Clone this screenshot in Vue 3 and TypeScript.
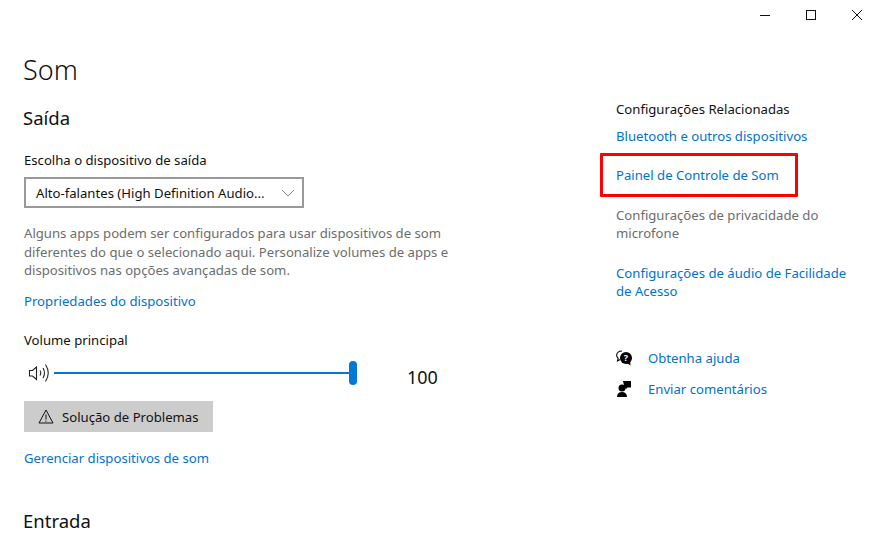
<template>
  <div class="window">
    <header class="titlebar">
      <button class="winbtn" type="button" aria-label="Minimizar">
        <svg width="10" height="10" viewBox="0 0 10 10"><path d="M0 5.500h10" stroke="#111" fill="none" /></svg>
      </button>
      <button class="winbtn" type="button" aria-label="Maximizar">
        <svg width="10" height="10" viewBox="0 0 10 10"><rect x=".5" y=".5" width="9" height="9" stroke="#111" fill="none" /></svg>
      </button>
      <button class="winbtn" type="button" aria-label="Fechar">
        <svg width="10" height="10" viewBox="0 0 10 10"><path d="M0 0l10 10M10 0L0 10" stroke="#111" fill="none" /></svg>
      </button>
    </header>

    <div class="content">
      <main class="main">
        <h1 class="title">Som</h1>
        <h2 class="section">Saída</h2>
        <div class="label">Escolha o dispositivo de saída</div>
        <div class="select">
          <span>Alto-falantes (High Definition Audio...</span>
          <svg width="14" height="8" viewBox="0 0 14 8"><path d="M1 1l6 6 6-6" stroke="#888" fill="none" /></svg>
        </div>
        <p class="hint">
          Alguns apps podem ser configurados para usar dispositivos de som<br />
          diferentes do que o selecionado aqui. Personalize volumes de apps e<br />
          dispositivos nas opções avançadas de som.
        </p>
        <a class="link props">Propriedades do dispositivo</a>
        <div class="label volume-label">Volume principal</div>
        <div class="volume">
          <svg class="speaker" width="22" height="20" viewBox="0 0 22 20">
            <path d="M1.500 7.500v5.500h3l4 3.500V4l-4 3.500z" stroke="#222" stroke-width="1.100" fill="none" />
            <path d="M12 7.500q1.500 2.500 0 5M15 5q3 5 0 10M17.500 1.500q5.500 8.500 0 17" stroke="#222" stroke-width="1.100" fill="none" />
          </svg>
          <div class="track"><span class="thumb"></span></div>
          <span class="value">{{ volume }}</span>
        </div>
        <button class="trouble" type="button">
          <svg width="16" height="15" viewBox="0 0 16 15"><path d="M8 1L1 14h14zM8 5.500v5M8 11.500v1.200" stroke="#111" fill="none" /></svg>
          <span>Solução de Problemas</span>
        </button>
        <a class="link manage">Gerenciar dispositivos de som</a>
        <h2 class="section entrada">Entrada</h2>
      </main>

      <aside class="side">
        <div class="side-head">Configurações Relacionadas</div>
        <a class="link bluetooth">Bluetooth e outros dispositivos</a>
        <div class="marked"><a class="link">Painel de Controle de Som</a></div>
        <div class="muted">Configurações de privacidade do<br />microfone</div>
        <a class="link access">Configurações de áudio de Facilidade<br />de Acesso</a>
        <div class="help-row first">
          <svg width="16" height="16" viewBox="0 0 16 16">
            <path d="M6 1C3 1 .7 2.900.7 5.300c0 1.200.6 2.300 1.500 3.100L1.500 11l2.700-1.500" fill="none" stroke="#000" stroke-width="1.100" />
            <circle cx="10" cy="8" r="6" fill="#000" />
            <path d="M11 13l3.500 2.500-.5-4.500z" fill="#000" />
            <text x="10" y="11.200" text-anchor="middle" class="qmark">?</text>
          </svg>
          <a class="link">Obtenha ajuda</a>
        </div>
        <div class="help-row second">
          <svg width="16" height="16" viewBox="0 0 16 16">
            <circle cx="6" cy="7" r="3.500" fill="#000" />
            <path d="M1 16c0-3.200 2-5 5-5s5 1.800 5 5z" fill="#000" />
            <path d="M7 0h8v6.500h-3.500l-2 2v-2H8.500z" fill="#000" />
          </svg>
          <a class="link">Enviar comentários</a>
        </div>
      </aside>
    </div>
  </div>
</template>

<script setup lang="ts">
import { ref } from 'vue'

const volume = ref<number>(100)
</script>

<style>
html,
body {
  margin: 0;
  background: #fff;
  overflow: hidden;
}
</style>

<style scoped>
.window {
  width: 871px;
  height: 533px;
  overflow: hidden;
  background: #fff;
  color: #111;
  font-family: "Noto Sans", "Open Sans", sans-serif;
  font-size: 13.150px;
}

.titlebar {
  display: flex;
  justify-content: flex-end;
  gap: 36px;
  height: 30px;
  padding-right: 9px;
}

.winbtn {
  width: 10px;
  height: 30px;
  padding: 0;
  border: none;
  background: none;
  display: flex;
  align-items: center;
  justify-content: center;
}

.content {
  display: flex;
}

.main {
  width: 592px;
  padding-left: 24px;
  box-sizing: border-box;
}

.title {
  margin: 20px 0 0 -1px;
  font-size: 27px;
  line-height: 40px;
  font-weight: 300;
}

.section {
  margin: 14px 0 0 -1px;
  font-size: 18.500px;
  line-height: 28px;
  font-weight: 400;
}

.label {
  line-height: 20px;
}

.section + .label {
  margin-top: 18px;
}

.select {
  display: flex;
  align-items: center;
  justify-content: space-between;
  width: 280px;
  height: 31px;
  margin-top: 7px;
  padding: 0 7px 0 10px;
  box-sizing: border-box;
  border: 2px solid #999;
}

.hint {
  margin: 16px 0 0;
  color: #6d6d6d;
  line-height: 18.500px;
}

.link {
  color: #0073cf;
  display: block;
  line-height: 18px;
}

.props {
  margin-top: 12px;
}

.volume-label {
  margin-top: 20px;
}

.volume {
  display: flex;
  align-items: center;
  height: 24px;
  margin-top: 11px;
  position: relative;
}

.speaker {
  margin-left: 4px;
  margin-right: 4px;
}

.track {
  position: relative;
  width: 302px;
  height: 2px;
  background: #0078d7;
}

.thumb {
  position: absolute;
  right: -1px;
  top: -11px;
  width: 8px;
  height: 24px;
  border-radius: 4px;
  background: #0078d7;
}

.value {
  margin-left: 51px;
  margin-top: 8px;
  font-size: 18px;
}

.trouble {
  display: flex;
  align-items: center;
  gap: 8px;
  width: 189px;
  height: 31px;
  margin-top: 16px;
  padding: 1px 0 0 14px;
  border: none;
  background: #ccc;
  color: #111;
  font: inherit;
}

.manage {
  margin-top: 17px;
}

.entrada {
  margin-top: 40px;
}

.side {
  width: 279px;
  padding-left: 24px;
  box-sizing: border-box;
}

.side-head {
  margin-top: 69px;
  line-height: 20px;
}

.bluetooth {
  margin-top: 8px;
}

.marked {
  display: flex;
  align-items: center;
  width: 198px;
  height: 44px;
  margin: 8px 0 0 -16px;
  padding-left: 13px;
  box-sizing: border-box;
  border: 3px solid #f00;
  border-radius: 1px;
}

.muted {
  margin-top: 9px;
  color: #6d6d6d;
  line-height: 18px;
}

.access {
  margin-top: 22px;
}

.help-row {
  display: flex;
  align-items: center;
  gap: 16px;
  height: 20px;
}

.first {
  margin-top: 48px;
}

.second {
  margin-top: 11px;
}

.qmark {
  font-size: 9px;
  font-weight: 700;
  fill: #fff;
}
</style>
